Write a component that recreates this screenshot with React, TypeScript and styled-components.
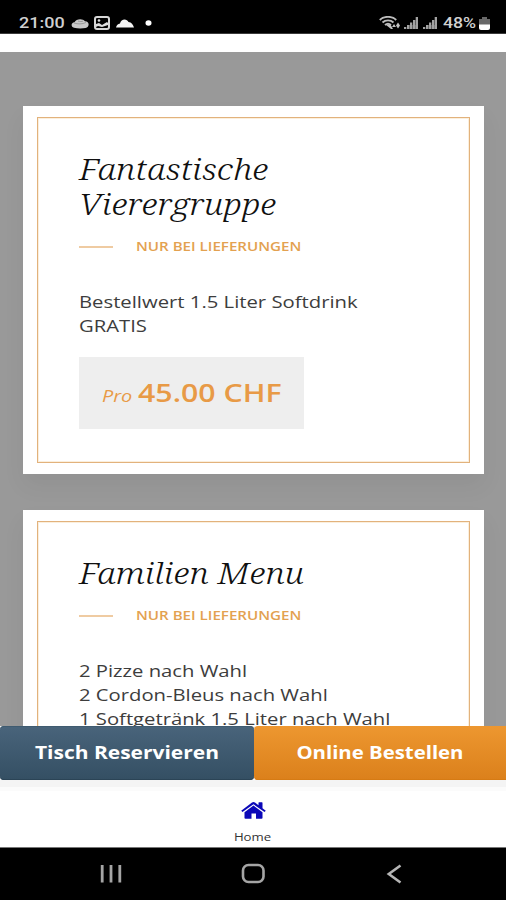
import React from 'react';
import styled, { createGlobalStyle, css } from 'styled-components';

const GlobalStyle = createGlobalStyle`
  *, *::before, *::after { box-sizing: border-box; }
  html, body { margin: 0; padding: 0; height: 100%; overflow: hidden; }
  #root { height: 100%; }
  h2, p { margin: 0; font-weight: 400; }
`;

const Screen = styled.div`
  display: flex;
  flex-direction: column;
  width: 506px;
  height: 900px;
  overflow: hidden;
  background: #fff;
  font-family: 'Open Sans', 'Noto Sans', sans-serif;
`;

/* Text drawn wider than its natural set width. */
const Wide = styled.span<{ $x: number; $center?: boolean }>`
  display: inline-block;
  white-space: nowrap;
  transform: scaleX(${(p) => p.$x});
  transform-origin: ${(p) => (p.$center ? 'center' : 'left')} center;
`;

const StatusBar = styled.header`
  display: flex;
  flex: none;
  justify-content: space-between;
  align-items: flex-start;
  height: 34px;
  padding: 13px 16px 0 19px;
  border-bottom: 1px solid #3a3a3a;
  background: #000;
  color: #d0d0d0;
  font: 500 15px/20px Roboto, sans-serif;
`;

const StatusGroup = styled.div`
  display: flex;
  align-items: center;
  height: 20px;
`;

const Clock = styled.div`
  width: 52px;
`;

const Percent = styled.div`
  width: 36px;
`;

const StatusIcon = styled.svg<{ $gap: number }>`
  display: block;
  flex: none;
  margin-right: ${(p) => p.$gap}px;
`;

const Offers = styled.main`
  flex: none;
  height: 674px;
  margin-top: 18px;
  padding: 54px 22px 0 23px;
  overflow: hidden;
  background: #999;
`;

const Card = styled.article<{ $height: number }>`
  height: ${(p) => p.$height}px;
  margin-bottom: 36px;
  padding: 11px 14px;
  background: #fff;
  box-shadow: 0 12px 22px rgba(0, 0, 0, 0.05);
`;

const CardFrame = styled.div`
  height: 100%;
  padding: 33px 0 0 41px;
  border: 1px solid #e2b27c;
  outline: 1px solid rgba(240, 190, 120, 0.25);
  outline-offset: -2px;
`;

const Title = styled.h2`
  color: #101010;
  font: italic 300 29px/35px 'Noto Serif', 'Liberation Serif', serif;
`;

const Note = styled.div`
  display: flex;
  align-items: center;
  gap: 23px;
  height: 20px;
  margin-top: 16px;
  color: #e3a150;
  font-size: 12px;
  font-weight: 600;
  line-height: 20px;

  &::before {
    content: '';
    width: 34px;
    height: 2px;
    background: #efcba2;
  }
`;

const Details = styled.p`
  margin-top: 33px;
  color: #3d3d3d;
  font-size: 17px;
  line-height: 24px;
`;

const Price = styled.div`
  display: flex;
  align-items: baseline;
  width: 225px;
  height: 72px;
  margin-top: 19px;
  padding-left: 23px;
  background: #eee;
  color: #e89a46;
  line-height: 71px;
`;

const Per = styled.div`
  width: 36px;
  font-size: 17px;
  font-style: italic;
`;

const Amount = styled.div`
  font-size: 26px;
  font-weight: 600;
`;

const Actions = styled.div`
  display: flex;
  flex: none;
  height: 65px;
  background: linear-gradient(#f4f4f4 0 61px, #fbfbfb 61px);
`;

const ActionButton = styled.button<{ $tone: 'slate' | 'orange' }>`
  height: 54px;
  padding: 0 0 2px;
  border: 0;
  border-radius: 4px;
  color: #fff;
  font: 700 18px/50px 'Open Sans', sans-serif;
  ${(p) =>
    p.$tone === 'slate'
      ? css`
          width: 254px;
          background: linear-gradient(#49647b, #344f63);
          box-shadow: inset 0 -1px 0 #2b4456, inset 0 1px 0 #3f5b70;
        `
      : css`
          width: 252px;
          border-radius: 4px 0 0 4px;
          background: linear-gradient(#ed9730, #db801b);
          box-shadow: inset 0 -1px 0 #d67b14;
        `}
`;

const HomeTab = styled.nav`
  display: flex;
  flex: none;
  flex-direction: column;
  align-items: center;
  height: 57px;
  padding-top: 11px;
  border-bottom: 1px solid #777;
  background: #fff;
  color: #333;
  font-size: 11px;
  line-height: 16px;
`;

const HomeIcon = styled.svg`
  display: block;
  flex: none;
  margin-bottom: 10px;
  fill: #0b08b8;
`;

const SystemBar = styled.footer`
  display: flex;
  flex: 1;
  align-items: flex-start;
  justify-content: space-between;
  padding: 15px 102px 0 99px;
  background: #000;
`;

function SignalIcon({ gap }: { gap: number }) {
  return (
    <StatusIcon $gap={gap} width="14" height="12" viewBox="0 0 14 12" fill="#a2a2a2">
      <path d="M0 10h2.300v2H0zM3 8h2.300v4H3zM6 5.500h2.300V12H6zM9 3h2.300v9H9zM11.700 0H14v12h-2.300z" />
      <path d="M5 8h7v4H5z" opacity=".45" />
    </StatusIcon>
  );
}

function Offer({ title, lines, height, price }: {
  title: [string, number][];
  lines: [string, number][];
  height: number;
  price?: string;
}) {
  return (
    <Card $height={height}>
      <CardFrame>
        <Title>
          {title.map(([text, x]) => (
            <React.Fragment key={text}><Wide $x={x}>{text}</Wide><br /></React.Fragment>
          ))}
        </Title>
        <Note><Wide $x={1.26}>NUR BEI LIEFERUNGEN</Wide></Note>
        <Details>
          {lines.map(([text, x]) => (
            <React.Fragment key={text}><Wide $x={x}>{text}</Wide><br /></React.Fragment>
          ))}
        </Details>
        {price && (
          <Price>
            <Per><Wide $x={1.17}>Pro</Wide></Per>
            <Amount><Wide $x={1.165}>{price}</Wide></Amount>
          </Price>
        )}
      </CardFrame>
    </Card>
  );
}

export default function App() {
  return (
    <>
      <GlobalStyle />
      <Screen>
        <StatusBar>
          <StatusGroup>
            <Clock><Wide $x={1.2}>21:00</Wide></Clock>
            <StatusIcon $gap={5} width="18" height="11" viewBox="0 0 18 11">
              <path d="M3 9.800C-.5 8.500 0 4.500 3.500 4.200 5 .5 12 .2 14 3.200c4.500 0 5 5.800.5 6.800-3 .7-8 .7-11.500-.2z" fill="#c9c9c9" />
              <path d="M3 5c4 1.300 8 1.300 12-.5M7 3c2 .8 4 .7 5 .1" fill="none" stroke="#9a9a9a" />
            </StatusIcon>
            <StatusIcon $gap={6} width="16" height="14" viewBox="0 0 16 14">
              <rect x="1" y="1" width="14" height="12" rx="2" fill="none" stroke="#d6d6d6" strokeWidth="2" />
              <path d="M2 8l3-1 3 2 5-3 1 1v2L8 11l-4-1-2 1z" fill="#dedede" />
              <circle cx="5" cy="4.500" r="1.300" fill="#dedede" />
            </StatusIcon>
            <StatusIcon $gap={11} width="18" height="9" viewBox="0 0 18 9" fill="#f4f4f4">
              <path d="M0 8.500C.5 6 2 5.200 4 4.500 5-.6 11-.6 12.500 3c3 .2 4.500 2.500 5.500 5.500z" />
            </StatusIcon>
            <StatusIcon $gap={0} width="7" height="6" viewBox="0 0 7 6" fill="#fff">
              <ellipse cx="3.500" cy="3" rx="3" ry="2.700" />
            </StatusIcon>
          </StatusGroup>
          <StatusGroup>
            <StatusIcon $gap={4} width="21" height="14" viewBox="0 0 21 14">
              <g fill="none" stroke="#bcbcbc" strokeWidth="1.900">
                <path d="M.8 4C5-.2 13-.2 17.200 4M3.500 6.500c3-2.800 8-2.800 11 0M6 9c2-1.700 4-1.700 6 0" />
              </g>
              <path d="M6.500 8.500h5L14 13h-2z" fill="#c2c2c2" />
              <path d="M15 8l2 3h-4zM19 6.500l2 3-2 3-2-3z" fill="#c2c2c2" />
            </StatusIcon>
            <SignalIcon gap={5} />
            <SignalIcon gap={6} />
            <Percent><Wide $x={1.18}>48%</Wide></Percent>
            <StatusIcon $gap={0} width="11" height="13" viewBox="0 0 11 13">
              <path d="M3 0h5v2h3v6H0V2h3z" fill="#686868" />
              <path d="M0 7.500h11V11q0 2-2 2H2q-2 0-2-2z" fill="#fff" />
            </StatusIcon>
          </StatusGroup>
        </StatusBar>

        <Offers>
          <Offer
            height={368}
            title={[['Fantastische', 1.195], ['Vierergruppe', 1.19]]}
            lines={[['Bestellwert 1.5 Liter Softdrink', 1.192], ['GRATIS', 1.19]]}
            price="45.00 CHF"
          />
          <Offer
            height={368}
            title={[['Familien Menu', 1.185]]}
            lines={[['2 Pizze nach Wahl', 1.19], ['2 Cordon-Bleus nach Wahl', 1.19], ['1 Softgetränk 1.5 Liter nach Wahl', 1.19]]}
          />
        </Offers>

        <Actions>
          <ActionButton $tone="slate"><Wide $x={1.165} $center>Tisch Reservieren</Wide></ActionButton>
          <ActionButton $tone="orange"><Wide $x={1.13} $center>Online Bestellen</Wide></ActionButton>
        </Actions>

        <HomeTab>
          <HomeIcon width="25" height="17" viewBox="0 0 25 17">
            <path d="M12.500 3.600L21.500 10.300V16q0 .8-1 .8h-5.500V11.500h-4.500v5.300H4.500q-1 0-1-.8v-5.700z" />
            <path d="M12.500 0q.8 0 1.500.6L17.500 3.200V.8q0-.5.6-.5h2.800q.6 0 .6.5v5.400L24.800 8.700 23.500 10 12.500 2.300 1.500 10 .2 8.700 11 .6Q11.700 0 12.500 0z" />
          </HomeIcon>
          <Wide $x={1.2} $center>Home</Wide>
        </HomeTab>

        <SystemBar>
          <svg width="24" height="22" viewBox="0 0 24 22" fill="none" stroke="#a5a5a5" strokeWidth="2.800">
            <path d="M3.200 2v17.500M12 2v17.500M20.800 2v17.500" />
          </svg>
          <svg width="30" height="22" viewBox="0 0 30 22" fill="none" stroke="#a5a5a5" strokeWidth="2.600">
            <rect x="3" y="2" width="20.500" height="17" rx="5.500" />
          </svg>
          <svg width="18" height="22" viewBox="0 0 18 22" fill="none" stroke="#b5b5b5" strokeWidth="2.600">
            <path d="M14.500 2.500L2.800 11l11.700 8.500" />
          </svg>
        </SystemBar>
      </Screen>
    </>
  );
}
